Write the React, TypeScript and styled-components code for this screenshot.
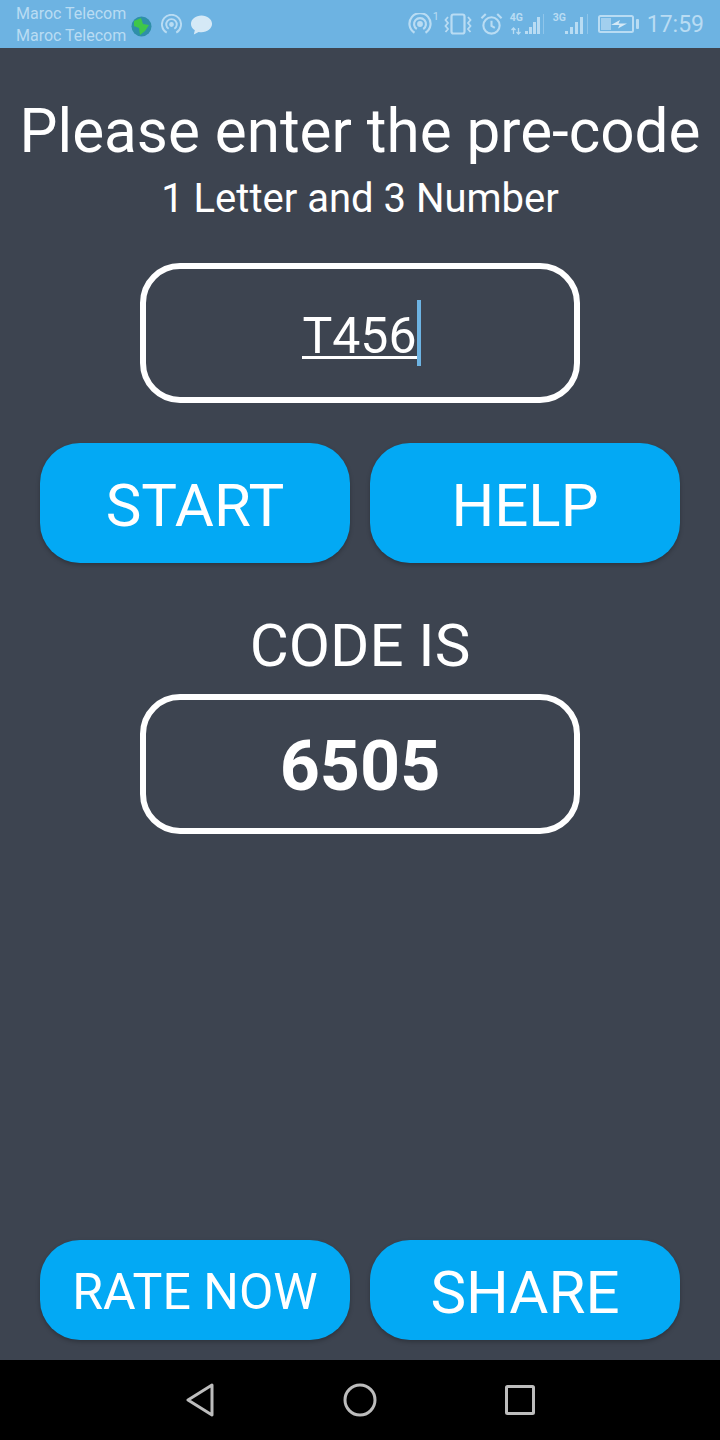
import styled, { createGlobalStyle } from "styled-components";

const GlobalStyle = createGlobalStyle`
  html, body {
    margin: 0;
    padding: 0;
    background: #3d4450;
  }
  * {
    box-sizing: border-box;
  }
`;

const Screen = styled.div`
  width: 720px;
  height: 1440px;
  display: flex;
  flex-direction: column;
  font-family: Roboto, "Liberation Sans", sans-serif;
  color: #ffffff;
  background: #3d4450;
  overflow: hidden;
`;

// Status bar
const StatusBar = styled.div`
  height: 48px;
  flex: none;
  display: flex;
  align-items: center;
  justify-content: space-between;
  padding: 0 16px;
  background: #6db3e2;
  color: #b9dcf3;
`;

const StatusGroup = styled.div`
  display: flex;
  align-items: center;
`;

const Carrier = styled.div`
  margin-top: 2px;
  font-size: 16px;
  line-height: 22px;
`;

const Clock = styled.span`
  font-size: 23px;
  margin-left: 7px;
`;

const StatusIcon = styled.svg<{ $gap?: number; $drop?: number }>`
  display: block;
  margin-left: ${(p) => p.$gap ?? 0}px;
  margin-top: ${(p) => p.$drop ?? 0}px;
`;

const Superscript = styled.span`
  width: 6px;
  margin-left: 1px;
  margin-bottom: 14px;
  font-size: 11px;
  line-height: 10px;
`;

const NetBlock = styled.div<{ $gap: number }>`
  position: relative;
  margin-left: ${(p) => p.$gap}px;
`;

const NetLabel = styled.span`
  position: absolute;
  left: 0;
  top: 1px;
  font-size: 10.5px;
  font-weight: 700;
  line-height: 10px;
`;

// Main content
const Main = styled.main`
  flex: 1;
  display: flex;
  flex-direction: column;
  align-items: center;
  padding: 49px 40px 20px;
`;

const Title = styled.h1`
  margin: 0;
  font-size: 60.2px;
  font-weight: 400;
  line-height: 70px;
  white-space: nowrap;
`;

const Subtitle = styled.p`
  margin: 9px 0 0;
  font-size: 40px;
  line-height: 46px;
`;

const OutlineBox = styled.div<{ $top: number }>`
  width: 440px;
  height: 140px;
  margin-top: ${(p) => p.$top}px;
  display: flex;
  align-items: center;
  justify-content: center;
  border: 6px solid #ffffff;
  border-radius: 40px;
`;

const InputText = styled.span`
  display: flex;
  align-items: center;
  height: 66px;
  margin-left: 3px;
  font-size: 50px;
`;

const Typed = styled.span`
  line-height: 40px;
  border-bottom: 3px solid #ffffff;
  margin-top: 8px;
`;

const Caret = styled.span`
  width: 4px;
  height: 66px;
  background: #6db3e2;
`;

const ButtonRow = styled.div<{ $top: number }>`
  width: 640px;
  margin-top: ${(p) => p.$top}px;
  display: grid;
  grid-template-columns: 1fr 1fr;
  gap: 20px;
`;

const ActionButton = styled.button<{ $height: number; $size: number }>`
  height: ${(p) => p.$height}px;
  padding: 4px 0 0;
  border: 0;
  border-radius: 40px;
  background: #03a9f4;
  color: #ffffff;
  font-family: inherit;
  font-size: ${(p) => p.$size}px;
  box-shadow: 0 2px 4px rgba(0, 0, 0, 0.25);
`;

const CodeLabel = styled.div`
  margin-top: 48px;
  font-size: 60px;
  line-height: 70px;
`;

const CodeValue = styled.span`
  padding-top: 4px;
  font-size: 70px;
  font-weight: 700;
`;

const Spacer = styled.div`
  flex: 1;
`;

// Navigation bar
const NavBar = styled.nav`
  height: 80px;
  flex: none;
  display: grid;
  grid-template-columns: repeat(3, 160px);
  justify-content: center;
  align-items: center;
  justify-items: center;
  background: #000000;
`;

const App = () => {
  return (
    <>
      <GlobalStyle />
      <Screen>
        <StatusBar>
          <StatusGroup>
            <Carrier>
              Maroc Telecom
              <br />
              Maroc Telecom
            </Carrier>
            <StatusIcon $gap={5} $drop={4} width="21" height="21" viewBox="0 0 21 21">
              <circle cx="10.500" cy="10.500" r="10" fill="#2f8fa8" />
              <path d="M3 5l7-3 2 6 6 1-4 6-5 4-1-7-5-2z" fill="#3fc74a" />
            </StatusIcon>
            <StatusIcon $gap={9} $drop={1} width="21" height="21" viewBox="0 0 22 22" fill="none" stroke="#b9dcf3" strokeWidth="2">
              <path d="M6 19.500a10 10 0 1 1 10 0" />
              <path d="M8 15.500a5.500 5.500 0 1 1 6 0" />
              <circle cx="11" cy="11" r="1.500" fill="#b9dcf3" />
            </StatusIcon>
            <StatusIcon $gap={8} $drop={1} width="23" height="22" viewBox="0 0 24 22">
              <path d="M12 1c6 0 11 3.800 11 8.800s-5 8.800-11 8.800c-1 0-2-.1-3-.3L4 21l1-4.500C2.500 15 1 12.600 1 9.800 1 4.800 6 1 12 1z" fill="#d5e9f6" />
            </StatusIcon>
          </StatusGroup>
          <StatusGroup>
            <StatusIcon width="24" height="22" viewBox="0 0 26 24" fill="none" stroke="#b9dcf3" strokeWidth="2.400">
              <path d="M7 21.500a11.500 11.500 0 1 1 12 0" />
              <path d="M9.500 17.500a6.500 6.500 0 1 1 7 0" />
              <circle cx="13" cy="12" r="2" fill="#b9dcf3" />
            </StatusIcon>
            <Superscript>1</Superscript>
            <StatusIcon $gap={5} width="28" height="22" viewBox="0 0 28 22" fill="none" stroke="#b9dcf3" strokeWidth="2.200">
              <rect x="7.500" y="1.500" width="13" height="19" rx="2" />
              <path d="M4 4L1.500 7 4 10 1.500 13 4 16 1.500 19M24 4l2.500 3L24 10l2.500 3L24 16l2.500 3" strokeWidth="1.800" />
            </StatusIcon>
            <StatusIcon $gap={8} width="23" height="24" viewBox="0 0 24 24" fill="none" stroke="#b9dcf3" strokeWidth="2.200">
              <circle cx="12" cy="13.500" r="8.500" />
              <path d="M12 8.500v5.500l3.500 2M1.500 6L6 1.500M22.500 6L18 1.500" />
            </StatusIcon>
            <NetBlock $gap={7}>
              <NetLabel>4G</NetLabel>
              <StatusIcon width="34" height="24" viewBox="0 0 34 24" fill="#b9dcf3">
                <path d="M15 19h3v3h-3zM19 15h3v7h-3zM23 10h3v12h-3zM27 5h3v17h-3z" />
                <path d="M3.500 22v-6M1.500 18l2-2 2 2M8.500 16v6M6.500 20l2 2 2-2" fill="none" stroke="#b9dcf3" strokeWidth="1.300" />
                <path d="M33 2h1v20h-1z" opacity=".45" />
              </StatusIcon>
            </NetBlock>
            <NetBlock $gap={9}>
              <NetLabel>3G</NetLabel>
              <StatusIcon width="35" height="24" viewBox="0 0 35 24" fill="#b9dcf3">
                <path d="M12 19h3v3h-3zM17 15h3v7h-3zM22 10h3v12h-3zM27 5h3v17h-3z" />
                <path d="M34 2h1v20h-1z" opacity=".45" />
              </StatusIcon>
            </NetBlock>
            <StatusIcon $gap={10} width="42" height="18" viewBox="0 0 42 18" fill="none">
              <rect x="1" y="1" width="34" height="16" rx="1.500" stroke="#b9dcf3" strokeWidth="2" />
              <rect x="3" y="3" width="10" height="12" fill="#b9dcf3" opacity=".7" />
              <path d="M13 10l9-5-1.500 3.500H29l-9 5 1.500-3.500z" fill="#d5e9f6" />
              <rect x="38" y="4" width="3" height="10" rx="1" fill="#b9dcf3" />
            </StatusIcon>
            <Clock>17:59</Clock>
          </StatusGroup>
        </StatusBar>

        <Main>
          <Title>Please enter the pre-code</Title>
          <Subtitle>1 Letter and 3 Number</Subtitle>

          <OutlineBox $top={41}>
            <InputText>
              <Typed>T456</Typed>
              <Caret />
            </InputText>
          </OutlineBox>

          <ButtonRow $top={40}>
            <ActionButton $height={120} $size={60}>START</ActionButton>
            <ActionButton $height={120} $size={60}>HELP</ActionButton>
          </ButtonRow>

          <CodeLabel>CODE IS</CodeLabel>
          <OutlineBox $top={13}>
            <CodeValue>6505</CodeValue>
          </OutlineBox>

          <Spacer />

          <ButtonRow $top={0}>
            <ActionButton $height={100} $size={50}>RATE NOW</ActionButton>
            <ActionButton $height={100} $size={60}>SHARE</ActionButton>
          </ButtonRow>
        </Main>

        <NavBar>
          <svg width="28" height="34" viewBox="0 0 28 34" fill="none" stroke="#bdbdbd" strokeWidth="3" strokeLinejoin="round">
            <path d="M26 2L2 17l24 15z" />
          </svg>
          <svg width="34" height="34" viewBox="0 0 34 34" fill="none" stroke="#bdbdbd" strokeWidth="3">
            <circle cx="17" cy="17" r="15" />
          </svg>
          <svg width="30" height="30" viewBox="0 0 30 30" fill="none" stroke="#bdbdbd" strokeWidth="3" strokeLinejoin="round">
            <rect x="1.500" y="1.500" width="27" height="27" rx="1" />
          </svg>
        </NavBar>
      </Screen>
    </>
  );
};

export default App;
